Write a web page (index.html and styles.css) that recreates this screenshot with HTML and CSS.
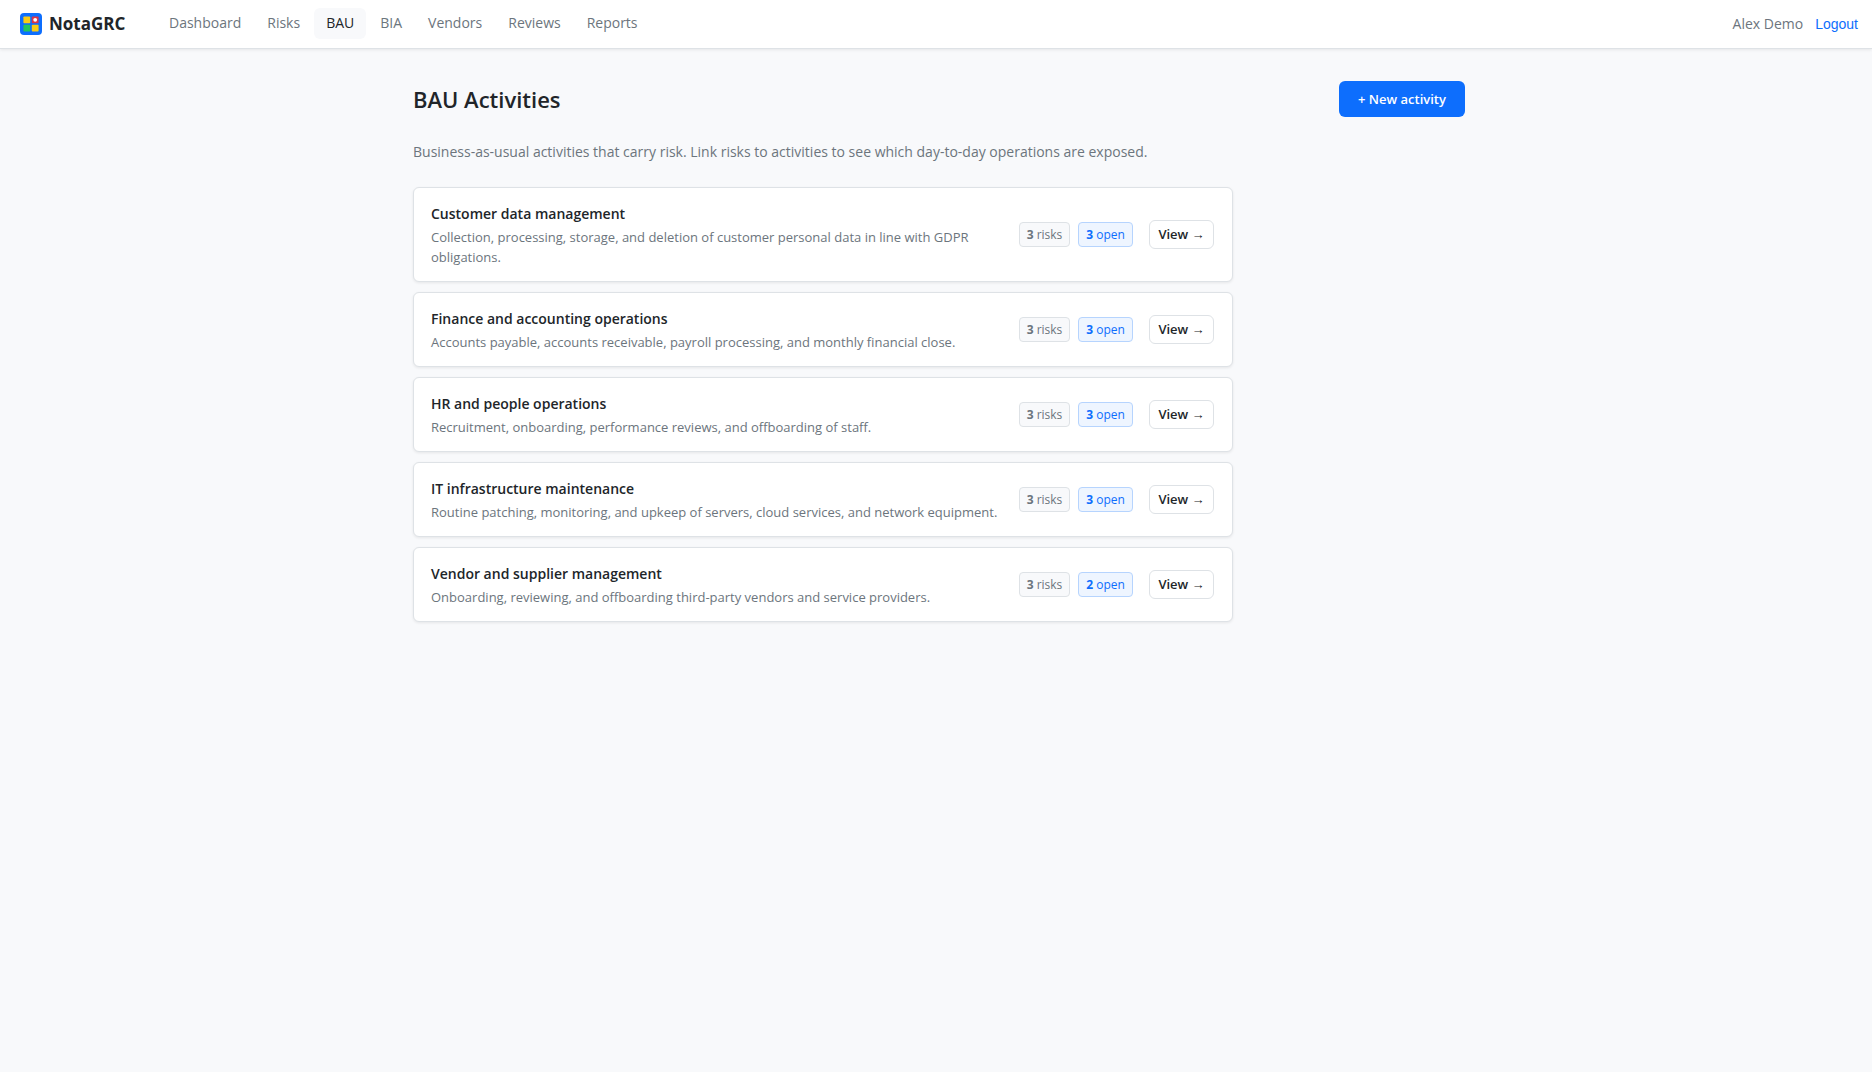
FILE: index.html
```html
<!DOCTYPE html>
<html lang="en">
<head>
<meta charset="utf-8">
<title>BAU Activities - NotaGRC</title>
<meta name="viewport" content="width=device-width, initial-scale=1">
<link rel="stylesheet" href="styles.css">
</head>
<body>
<header class="topbar">
  <a class="brand" href="#">
    <svg class="brand-logo" viewBox="0 0 22 22" aria-hidden="true">
      <rect width="22" height="22" rx="4" fill="#0d6efd"/>
      <rect x="3.4" y="3.4" width="6.8" height="6.8" rx=".8" fill="#facc15"/>
      <rect x="11.8" y="3.4" width="6.8" height="6.8" rx=".8" fill="#dc3545"/>
      <circle cx="15.2" cy="6.8" r="1.9" fill="#fff"/>
      <rect x="3.4" y="11.8" width="6.8" height="6.8" rx=".8" fill="#22c55e"/>
      <rect x="11.8" y="11.8" width="6.8" height="6.8" rx=".8" fill="#facc15"/>
    </svg>
    <span>NotaGRC</span>
  </a>
  <nav class="nav">
    <a href="#">Dashboard</a>
    <a href="#">Risks</a>
    <a class="active" href="#">BAU</a>
    <a href="#">BIA</a>
    <a href="#">Vendors</a>
    <a href="#">Reviews</a>
    <a href="#">Reports</a>
  </nav>
  <div class="account">
    <span>Alex Demo</span>
    <button class="logout" type="button">Logout</button>
  </div>
</header>
<main class="page">
  <div class="page-head">
    <h1>BAU Activities</h1>
    <button class="btn-primary" type="button">+ New activity</button>
  </div>
  <p class="intro">Business-as-usual activities that carry risk. Link risks to activities to see which day-to-day operations are exposed.</p>
  <div class="list">
    <article class="card">
      <div class="info">
        <h2>Customer data management</h2>
        <p>Collection, processing, storage, and deletion of customer personal data in line with GDPR obligations.</p>
      </div>
      <div class="badges"><span class="badge"><b>3</b> risks</span><span class="badge open"><b>3</b> open</span></div>
      <a class="view" href="#">View →</a>
    </article>
    <article class="card">
      <div class="info">
        <h2>Finance and accounting operations</h2>
        <p>Accounts payable, accounts receivable, payroll processing, and monthly financial close.</p>
      </div>
      <div class="badges"><span class="badge"><b>3</b> risks</span><span class="badge open"><b>3</b> open</span></div>
      <a class="view" href="#">View →</a>
    </article>
    <article class="card">
      <div class="info">
        <h2>HR and people operations</h2>
        <p>Recruitment, onboarding, performance reviews, and offboarding of staff.</p>
      </div>
      <div class="badges"><span class="badge"><b>3</b> risks</span><span class="badge open"><b>3</b> open</span></div>
      <a class="view" href="#">View →</a>
    </article>
    <article class="card">
      <div class="info">
        <h2>IT infrastructure maintenance</h2>
        <p>Routine patching, monitoring, and upkeep of servers, cloud services, and network equipment.</p>
      </div>
      <div class="badges"><span class="badge"><b>3</b> risks</span><span class="badge open"><b>3</b> open</span></div>
      <a class="view" href="#">View →</a>
    </article>
    <article class="card">
      <div class="info">
        <h2>Vendor and supplier management</h2>
        <p>Onboarding, reviewing, and offboarding third-party vendors and service providers.</p>
      </div>
      <div class="badges"><span class="badge"><b>3</b> risks</span><span class="badge open"><b>2</b> open</span></div>
      <a class="view" href="#">View →</a>
    </article>
  </div>
</main>
</body>
</html>
```
FILE: styles.css
```css
*, *::before, *::after { box-sizing: border-box; }

body {
  margin: 0;
  background: #f8f9fb;
  color: #212529;
  font-family: "Segoe UI", "Open Sans", "Noto Sans", sans-serif;
  font-size: 14px;
  line-height: 20px;
}

h1, h2, p { margin: 0; }
a { color: inherit; text-decoration: none; }
button { font: inherit; cursor: pointer; }

.topbar {
  display: flex;
  align-items: center;
  padding: 8px 14px 9px 20px;
  background: #fff;
  border-bottom: 1px solid #dee2e6;
  box-shadow: 0 1px 3px rgba(0, 0, 0, .08);
}

.brand {
  display: flex;
  align-items: center;
  gap: 7px;
  width: 137px;
  font-size: 17px;
  font-weight: 700;
}
.brand-logo { width: 22px; height: 22px; }

.nav { display: flex; gap: 2px; color: #6c757d; }
.nav a { padding: 5px 12px 6px; border-radius: 6px; }
.nav .active { background: #f8f9fb; color: #212529; }

.account {
  display: flex;
  align-items: center;
  gap: 12px;
  margin-left: auto;
  color: #6c757d;
}
.logout {
  padding: 0;
  border: 0;
  background: none;
  color: #0d6efd;
  font-family: "Liberation Sans", Arial, sans-serif;
}

.page { max-width: 1106px; margin: 0 auto; padding: 32px 24px 32px 30px; }

.page-head {
  display: flex;
  align-items: center;
  justify-content: space-between;
  margin-bottom: 24px;
}
h1 { font-size: 22px; line-height: 36px; font-weight: 600; }

.btn-primary {
  width: 126px;
  height: 36px;
  padding: 0;
  border: 0;
  border-radius: 6px;
  background: #0d6efd;
  color: #fff;
  font-size: 13px;
  font-weight: 600;
}

.intro { margin-bottom: 24px; line-height: 22px; color: #6c757d; }

.list { display: grid; gap: 10px; max-width: 820px; }

.card {
  display: flex;
  align-items: center;
  gap: 16px;
  padding: 14px 18px 14px 17px;
  border: 1px solid #dee2e6;
  border-radius: 6px;
  background: #fff;
  box-shadow: 0 1px 3px rgba(0, 0, 0, .08);
}
.info { flex: 1; min-width: 0; }
.info h2 { margin-bottom: 2px; font-size: 14px; line-height: 23px; font-weight: 600; }
.info p { font-size: 13px; color: #6c757d; }

.badges { display: flex; gap: 8px; }
.badge {
  min-width: 51px;
  padding: 2px 0 1px;
  border: 1px solid #dee2e6;
  border-radius: 4px;
  background: #f8f9fb;
  color: #6c757d;
  font-size: 12px;
  text-align: center;
}
.badge.open { min-width: 55px; border-color: #b6d4fe; background: #eef5ff; color: #0d6efd; }

.view {
  min-width: 65px;
  padding: 3px 0 4px;
  border: 1px solid #dee2e6;
  border-radius: 6px;
  font-size: 13px;
  font-weight: 600;
  text-align: center;
}
```
